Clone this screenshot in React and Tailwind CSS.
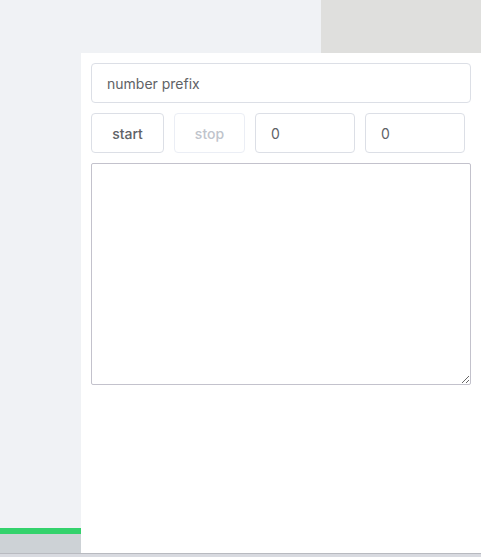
import React from 'react';

export default function App() {
  return (
    <div className="flex h-[557px] w-[481px] flex-col overflow-hidden bg-[#f0f2f5] font-['Inter','Liberation_Sans',Arial,sans-serif] text-[14px] text-[#606266]">
      <div className="flex h-[53px]">
        <div className="flex-1" />
        <div className="w-[160px] bg-[#dfdfdd]" />
      </div>
      <div className="flex h-[500px]">
        <div className="flex w-[81px] flex-col">
          <div className="flex-1" />
          <div className="h-[6px] bg-[#33d26c]" />
          <div className="h-[19px] bg-[#cdd2d6]" />
        </div>
        <div className="flex flex-1 flex-col gap-[10px] bg-white p-[10px]">
          <input
            defaultValue="number prefix"
            className="h-[40px] w-[380px] rounded-[4px] border border-[#dcdfe6] px-[15px] text-[14px] text-[#606266] outline-none"
          />
          <div className="flex gap-[10px]">
            <button className="h-[40px] w-[73px] rounded-[4px] border border-[#dcdfe6] bg-white font-medium text-[#606266]">
              start
            </button>
            <button disabled className="h-[40px] w-[71px] rounded-[4px] border border-[#ebeef5] bg-white font-medium text-[#c0c4cc]">
              stop
            </button>
            <input
              defaultValue="0"
              className="h-[40px] w-[100px] rounded-[4px] border border-[#dcdfe6] px-[15px] text-[14px] text-[#606266] outline-none"
            />
            <input
              defaultValue="0"
              className="h-[40px] w-[100px] rounded-[4px] border border-[#dcdfe6] px-[15px] text-[14px] text-[#606266] outline-none"
            />
          </div>
          <textarea className="h-[222px] w-[380px] rounded-[2px] border border-[#c3c2cc] outline-none" />
        </div>
      </div>
      <div className="h-px bg-[#b8bac0]" />
      <div className="flex-1 bg-[#d8dae0]" />
    </div>
  );
}
